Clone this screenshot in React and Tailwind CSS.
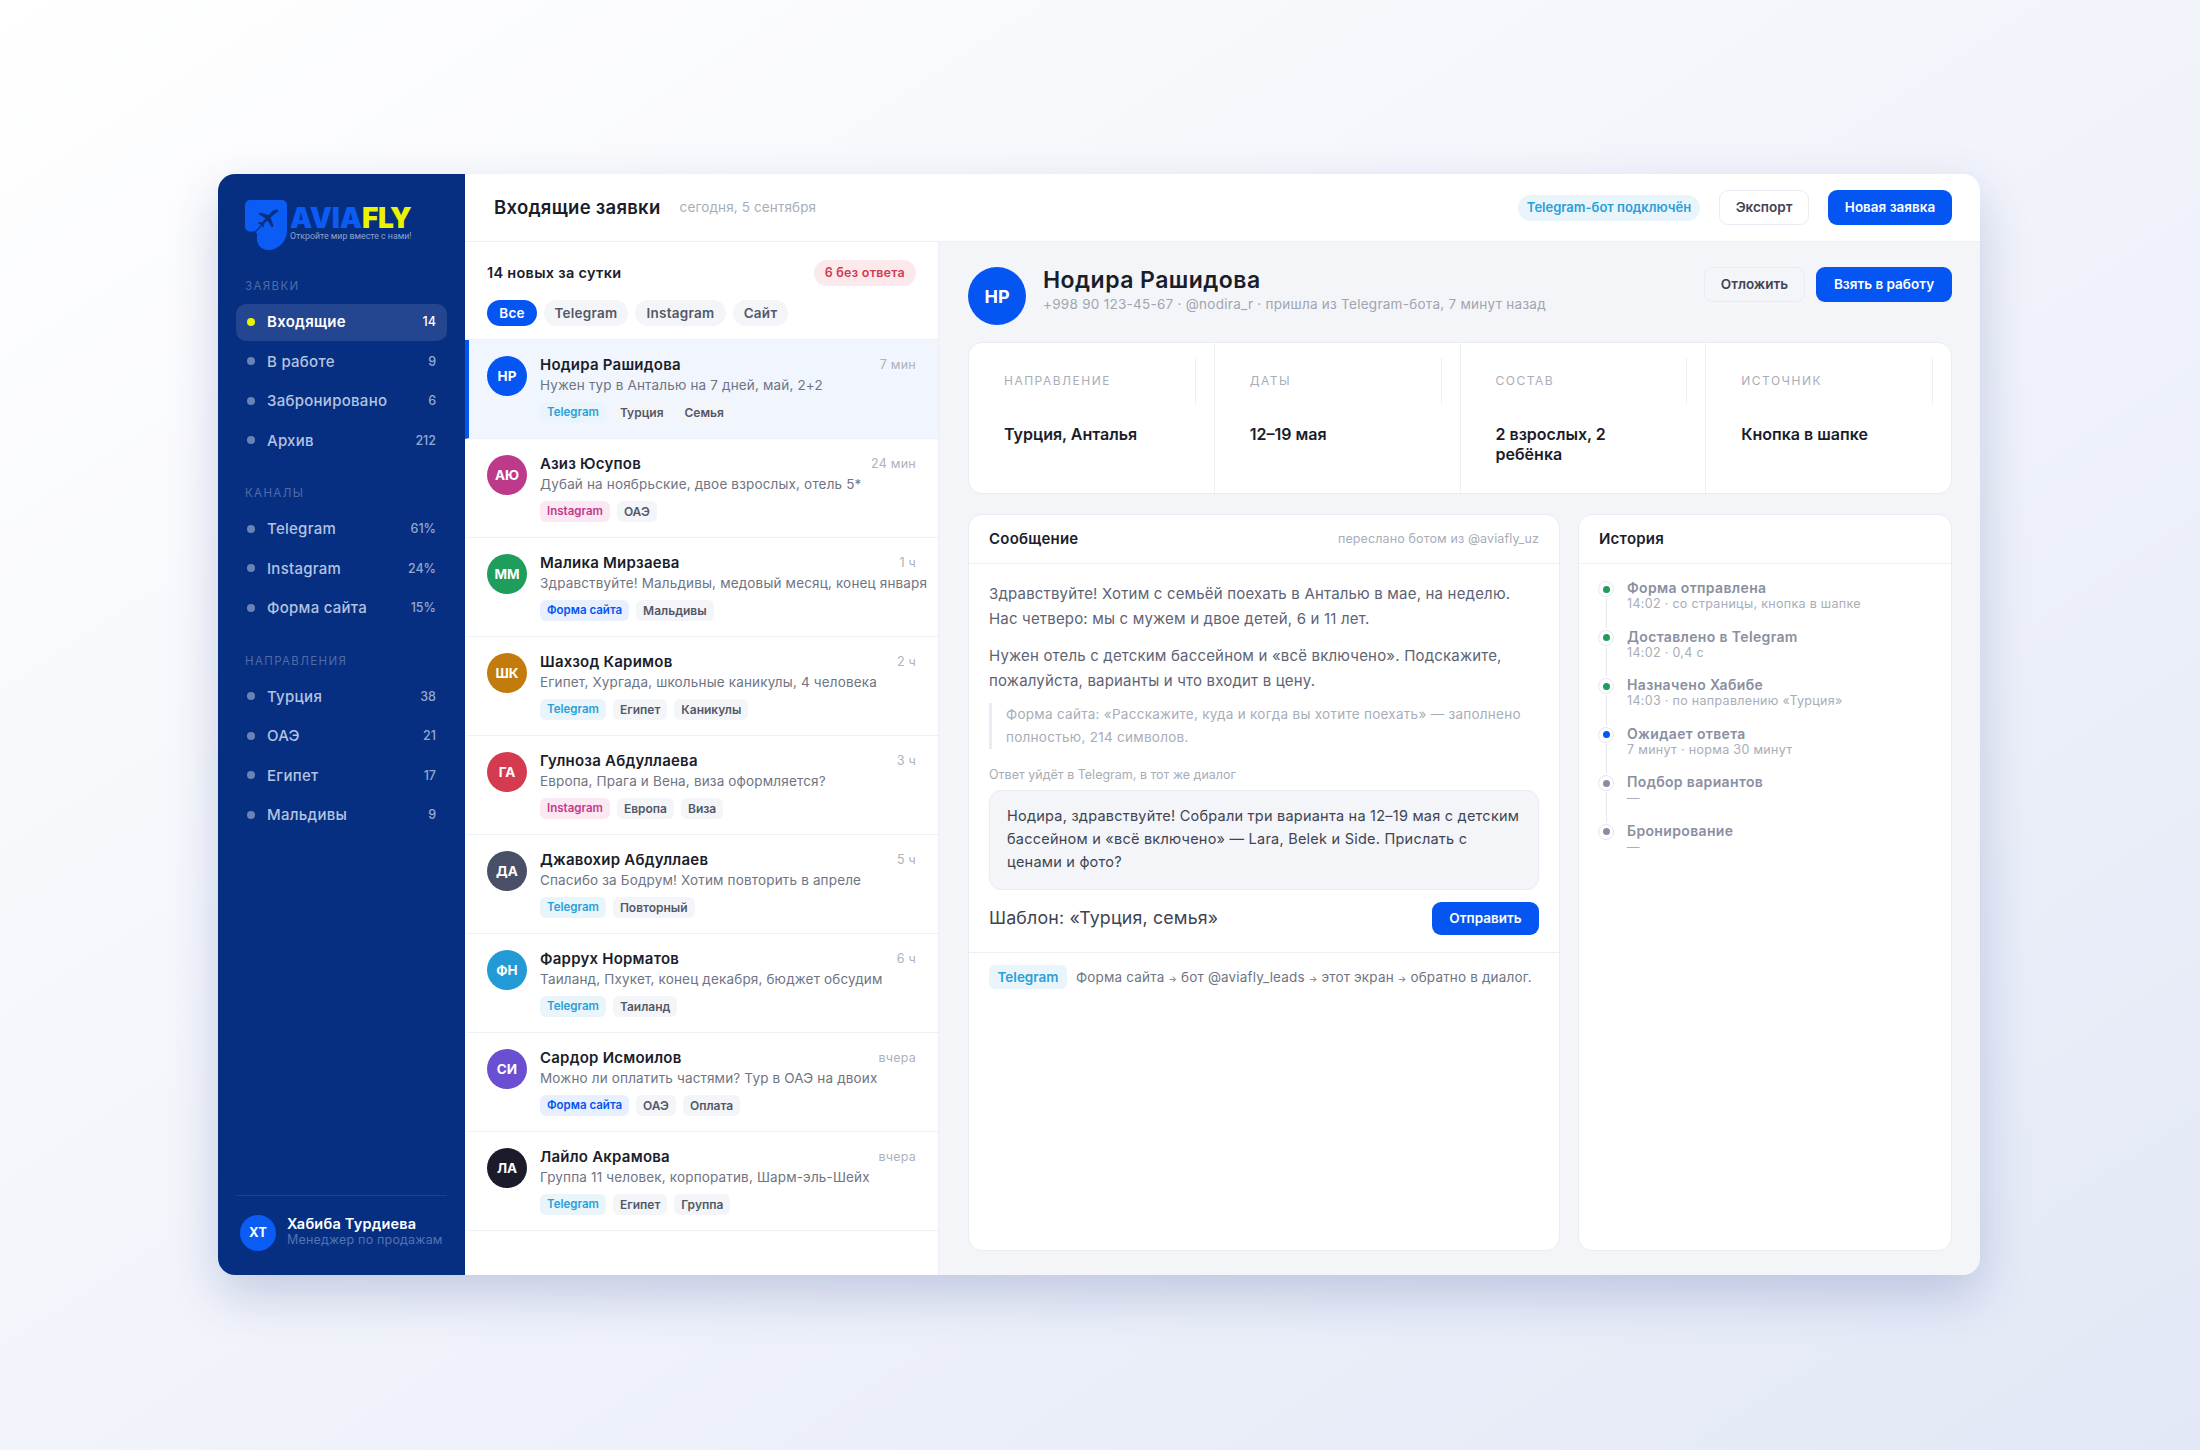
const rows = [
  { i: 'НР', c: 'bg-[#0455f2]', n: 'Нодира Рашидова', t: '7 мин', m: 'Нужен тур в Анталью на 7 дней, май, 2+2', s: 'tg', tags: ['Турция', 'Семья'], active: true },
  { i: 'АЮ', c: 'bg-[#bd3a8b]', n: 'Азиз Юсупов', t: '24 мин', m: 'Дубай на ноябрьские, двое взрослых, отель 5*', s: 'ig', tags: ['ОАЭ'] },
  { i: 'ММ', c: 'bg-[#1f9d5c]', n: 'Малика Мирзаева', t: '1 ч', m: 'Здравствуйте! Мальдивы, медовый месяц, конец января', s: 'web', tags: ['Мальдивы'] },
  { i: 'ШК', c: 'bg-[#c27c0e]', n: 'Шахзод Каримов', t: '2 ч', m: 'Египет, Хургада, школьные каникулы, 4 человека', s: 'tg', tags: ['Египет', 'Каникулы'] },
  { i: 'ГА', c: 'bg-[#d43a50]', n: 'Гулноза Абдуллаева', t: '3 ч', m: 'Европа, Прага и Вена, виза оформляется?', s: 'ig', tags: ['Европа', 'Виза'] },
  { i: 'ДА', c: 'bg-[#4a4f68]', n: 'Джавохир Абдуллаев', t: '5 ч', m: 'Спасибо за Бодрум! Хотим повторить в апреле', s: 'tg', tags: ['Повторный'] },
  { i: 'ФН', c: 'bg-[#229ad6]', n: 'Фаррух Норматов', t: '6 ч', m: 'Таиланд, Пхукет, конец декабря, бюджет обсудим', s: 'tg', tags: ['Таиланд'] },
  { i: 'СИ', c: 'bg-[#6a4fd2]', n: 'Сардор Исмоилов', t: 'вчера', m: 'Можно ли оплатить частями? Тур в ОАЭ на двоих', s: 'web', tags: ['ОАЭ', 'Оплата'] },
  { i: 'ЛА', c: 'bg-[#1b1b2b]', n: 'Лайло Акрамова', t: 'вчера', m: 'Группа 11 человек, корпоратив, Шарм-эль-Шейх', s: 'tg', tags: ['Египет', 'Группа'] },
];

const src = {
  tg: { l: 'Telegram', c: 'bg-[#e9f5fb] text-[#2a9fd8]' },
  ig: { l: 'Instagram', c: 'bg-[#fbe8f2] text-[#c4388c]' },
  web: { l: 'Форма сайта', c: 'bg-[#e8effe] text-[#0455f2]' },
};

const history = [
  ['Форма отправлена', '14:02 · со страницы, кнопка в шапке', 'bg-[#1f9d5c]'],
  ['Доставлено в Telegram', '14:02 · 0,4 с', 'bg-[#1f9d5c]'],
  ['Назначено Хабибе', '14:03 · по направлению «Турция»', 'bg-[#1f9d5c]'],
  ['Ожидает ответа', '7 минут · норма 30 минут', 'bg-[#0455f2]'],
  ['Подбор вариантов', '—', 'bg-[#8a8ca3]'],
  ['Бронирование', '—', 'bg-[#8a8ca3]'],
];

function NavItem({ label, count, active }) {
  return (
    <div className={`flex items-center h-[37px] mb-[2.5px] pl-[11px] pr-[11px] rounded-[10px] ${active ? 'bg-[#24458f]' : ''}`}>
      <span className={`w-[8px] h-[8px] rounded-full mr-[12px] -translate-y-[1px] ${active ? 'bg-[#e9f500]' : 'bg-[#6a83b6]'}`} />
      <span className={`flex-1 text-[15px] tracking-[0.018em] ${active ? 'text-white font-semibold' : 'text-[#b4c3e0] font-medium'}`}>{label}</span>
      <span className={`text-[12.5px] font-medium ${active ? 'text-white' : 'text-[#94a8cf]'}`}>{count}</span>
    </div>
  );
}

function NavLabel({ children, className }) {
  return <div className={`h-[16px] leading-[16px] pl-[9px] text-[11.5px] font-normal tracking-[0.12em] text-[#4f6ca8] mb-[10px] ${className}`}>{children}</div>;
}

function Sidebar() {
  return (
    <aside className="w-[247px] shrink-0 bg-[#062f82] flex flex-col px-[18px]">
      <div className="flex items-start h-[76px] pt-[26px] pl-[9px] mb-[2px]">
        <svg width="42" height="50" viewBox="0 0 42 50" className="shrink-0">
          <path d="M5 0H37a5 5 0 0 1 5 5V30C42 42 33 50 23 50C16 50 11 44 12 37C12.5 33.5 11 31.5 8 31.5H5C2 31.5 0 29 0 26.5V5A5 5 0 0 1 5 0Z" fill="#0a5cf5" />
          <path d="M33 10C31.5 8.5 28.5 10 26.5 12L23.5 15L15 12.5L13.5 14L20.5 18.5L17 22.5L14 22L13 23L16 25L18 27.5L19 26.5L18.5 24L22.5 20.5L27 27.5L28.5 26L25.5 17.5L29.5 14C31.5 12.5 34.5 11.5 33 10Z" fill="#062f82" />
          <path d="M16 26L9 33" stroke="#062f82" strokeWidth="1.2" />
        </svg>
        <div className="ml-[3px] mt-[7px]">
          <div className="text-[28px] leading-[23px] font-black font-['Inter',sans-serif] tracking-[-0.005em]">
            <span className="text-[#0a5cf5]">AVIA</span><span className="text-[#e9f500]">FLY</span>
          </div>
          <div className="text-[8.8px] leading-[11px] mt-[1px] text-[#8ba3cf] font-['Roboto',sans-serif] whitespace-nowrap">Откройте мир вместе с нами!</div>
        </div>
      </div>
      <NavLabel className="mt-[26px]">ЗАЯВКИ</NavLabel>
      <NavItem label="Входящие" count="14" active />
      <NavItem label="В работе" count="9" />
      <NavItem label="Забронировано" count="6" />
      <NavItem label="Архив" count="212" />
      <NavLabel className="mt-[23px]">КАНАЛЫ</NavLabel>
      <NavItem label="Telegram" count="61%" />
      <NavItem label="Instagram" count="24%" />
      <NavItem label="Форма сайта" count="15%" />
      <NavLabel className="mt-[23px]">НАПРАВЛЕНИЯ</NavLabel>
      <NavItem label="Турция" count="38" />
      <NavItem label="ОАЭ" count="21" />
      <NavItem label="Египет" count="17" />
      <NavItem label="Мальдивы" count="9" />
      <div className="mt-auto border-t border-[#1c418f] h-[80px] flex items-center pl-[4px] pb-[6px]">
        <div className="w-[36px] h-[36px] rounded-full bg-[#0a5cf5] text-white text-[13px] font-bold flex items-center justify-center mr-[11px]">ХТ</div>
        <div className="-mt-[3px]">
          <div className="text-[14.5px] leading-[17px] font-semibold text-white tracking-[0.015em]">Хабиба Турдиева</div>
          <div className="text-[12.5px] leading-[15px] text-[#5473ae] tracking-[0.015em] whitespace-nowrap">Менеджер по продажам</div>
        </div>
      </div>
    </aside>
  );
}

function Tag({ children, className }) {
  return <span className={`h-[21px] px-[7px] rounded-[6px] font-semibold flex items-center ${className}`}>{children}</span>;
}

function Row({ r }) {
  return (
    <div className={`h-[99px] shrink-0 border-b border-[#eceff4] flex pt-[16px] pl-[18px] pr-[22px] border-l-[4px] ${r.active ? 'bg-[#f1f5fd] border-l-[#0455f2]' : 'border-l-transparent'}`}>
      <div className={`w-[40px] h-[40px] rounded-full ${r.c} text-white text-[13.5px] font-bold flex items-center justify-center shrink-0 mr-[13px]`}>{r.i}</div>
      <div className="flex-1 min-w-0">
        <div className="flex justify-between items-center h-[18px]">
          <span className="text-[15px] font-semibold text-[#1a1d2b] tracking-[0.015em]">{r.n}</span>
          <span className="text-[12.5px] text-[#adb2bc] tracking-[0.02em]">{r.t}</span>
        </div>
        <div className="text-[13.5px] leading-[20px] mt-[1px] text-[#6f7483] tracking-[0.012em] whitespace-nowrap">{r.m}</div>
        <div className="flex gap-[7px] mt-[7px]">
          <Tag className={`text-[11.5px] ${src[r.s].c}`}>{src[r.s].l}</Tag>
          {r.tags.map((t) => <Tag key={t} className="text-[12px] bg-[#f3f5f9] text-[#535867]">{t}</Tag>)}
        </div>
      </div>
    </div>
  );
}

function ListPanel() {
  return (
    <section className="w-[474px] shrink-0 bg-white border-r border-[#eceff4] flex flex-col">
      <div className="h-[98px] shrink-0 border-b border-[#eceff4] pl-[22px] pr-[22px] pt-[18px]">
        <div className="flex justify-between items-center h-[26px]">
          <span className="text-[14.5px] font-semibold text-[#1a1d2b] tracking-[0.02em]">14 новых за сутки</span>
          <span className="h-[26px] px-[11px] rounded-full bg-[#fce9ec] text-[#d13a50] text-[12.5px] font-semibold tracking-[0.02em] flex items-center">6 без ответа</span>
        </div>
        <div className="flex gap-[7px] mt-[14px] text-[13.5px] font-semibold tracking-[0.02em]">
          <span className="h-[26px] w-[50px] rounded-full bg-[#0455f2] text-white flex items-center justify-center">Все</span>
          <span className="h-[26px] w-[84px] rounded-full bg-[#f3f5f9] text-[#535867] flex items-center justify-center">Telegram</span>
          <span className="h-[26px] w-[91px] rounded-full bg-[#f3f5f9] text-[#535867] flex items-center justify-center">Instagram</span>
          <span className="h-[26px] w-[55px] rounded-full bg-[#f3f5f9] text-[#535867] flex items-center justify-center">Сайт</span>
        </div>
      </div>
      {rows.map((r) => <Row key={r.i} r={r} />)}
    </section>
  );
}

function InfoCell({ label, value, last }) {
  return (
    <div className={`flex-1 basis-0 min-w-0 flex flex-col pt-[15px] pl-[35px] pr-[18px] ${last ? '' : 'border-r border-[#eceff4]'}`}>
      <div className="h-[46px] flex items-center border-r border-[#eceff4] text-[12px] tracking-[0.125em] text-[#a8adb8]">{label}</div>
      <div className="mt-[20px] pr-[30px] text-[16px] leading-[20px] font-semibold text-[#1a1d2b]">{value}</div>
    </div>
  );
}

function Detail() {
  return (
    <section className="flex-1 min-w-0 bg-[#f3f5f9] flex flex-col pl-[29px] pr-[28px] pt-[25px] pb-[24px]">
      <div className="flex items-center h-[58px] shrink-0">
        <div className="w-[58px] h-[58px] rounded-full bg-[#0455f2] text-white text-[18px] font-bold flex items-center justify-center mr-[17px]">НР</div>
        <div className="flex-1 -mt-[13px]">
          <div className="text-[23px] leading-[28px] font-semibold text-[#1a1d2b] tracking-[0.02em]">Нодира Рашидова</div>
          <div className="text-[13.5px] leading-[18px] mt-[1px] text-[#a0a5b1] tracking-[0.02em]">+998 90 123-45-67 · @nodira_r · пришла из Telegram-бота, 7 минут назад</div>
        </div>
        <div className="flex gap-[11px] self-start">
          <span className="w-[101px] h-[35px] rounded-[9px] border border-[#e8ebf1] bg-[#f3f5f9] text-[#3f4453] text-[13.5px] font-semibold flex items-center justify-center">Отложить</span>
          <span className="w-[136px] h-[35px] rounded-[9px] bg-[#0455f2] text-white text-[13.5px] font-semibold flex items-center justify-center">Взять в работу</span>
        </div>
      </div>
      <div className="mt-[17px] h-[152px] shrink-0 flex bg-white rounded-[14px] border border-[#e9ecf2] overflow-hidden">
        <InfoCell label="НАПРАВЛЕНИЕ" value="Турция, Анталья" />
        <InfoCell label="ДАТЫ" value="12–19 мая" />
        <InfoCell label="СОСТАВ" value="2 взрослых, 2 ребёнка" />
        <InfoCell label="ИСТОЧНИК" value="Кнопка в шапке" last />
      </div>
      <div className="mt-[20px] flex-1 flex gap-[18px] min-h-0">
        <div className="w-[592px] shrink-0 bg-white rounded-[14px] border border-[#e9ecf2] flex flex-col">
          <div className="h-[49px] shrink-0 border-b border-[#eceff4] flex items-center justify-between px-[20px]">
            <span className="text-[15px] font-semibold text-[#1a1d2b] tracking-[0.015em]">Сообщение</span>
            <span className="text-[12.5px] text-[#a8adb8] tracking-[0.01em]">переслано ботом из @aviafly_uz</span>
          </div>
          <div className="px-[20px] pt-[18px] pb-[17px] border-b border-[#eceff4] h-[389px] shrink-0">
            <p className="text-[15px] leading-[24.5px] text-[#5e6373] tracking-[0.012em]">Здравствуйте! Хотим с семьёй поехать в Анталью в мае, на неделю.<br />Нас четверо: мы с мужем и двое детей, 6 и 11 лет.</p>
            <p className="text-[15px] leading-[24.5px] text-[#5e6373] tracking-[0.012em] mt-[13px]">Нужен отель с детским бассейном и «всё включено». Подскажите,<br />пожалуйста, варианты и что входит в цену.</p>
            <div className="mt-[10px] border-l-[3px] border-[#e9ecf2] pl-[14px] text-[13.5px] leading-[23px] text-[#a8adb8] tracking-[0.02em]">Форма сайта: «Расскажите, куда и когда вы хотите поехать» — заполнено<br />полностью, 214 символов.</div>
            <div className="mt-[17px] text-[12.5px] leading-[18px] text-[#a8adb8]">Ответ уйдёт в Telegram, в тот же диалог</div>
            <div className="mt-[6px] h-[100px] rounded-[12px] bg-[#f3f5f9] border border-[#e9ecf2] px-[17px] py-[13px] text-[14.5px] leading-[23px] text-[#3f4453] tracking-[0.016em]">Нодира, здравствуйте! Собрали три варианта на 12–19 мая с детским<br />бассейном и «всё включено» — Lara, Belek и Side. Прислать с<br />ценами и фото?</div>
            <div className="mt-[12px] flex items-center justify-between">
              <span className="text-[17.8px] text-[#3f4453] tracking-[0.01em]">Шаблон: «Турция, семья»</span>
              <span className="w-[107px] h-[33px] rounded-[9px] bg-[#0455f2] text-white text-[13.5px] font-semibold flex items-center justify-center">Отправить</span>
            </div>
          </div>
          <div className="flex items-center px-[20px] pt-[12px]">
            <span className="h-[24px] w-[78px] shrink-0 rounded-[6px] bg-[#e9f5fb] text-[#2a9fd8] text-[13.5px] font-semibold flex items-center justify-center mr-[9px]">Telegram</span>
            <span className="text-[13.5px] text-[#6f7483] tracking-[0.012em] whitespace-nowrap">Форма сайта <span className="text-[9px]">→</span> бот @aviafly_leads <span className="text-[9px]">→</span> этот экран <span className="text-[9px]">→</span> обратно в диалог.</span>
          </div>
        </div>
        <div className="flex-1 bg-white rounded-[14px] border border-[#e9ecf2] flex flex-col">
          <div className="h-[49px] shrink-0 border-b border-[#eceff4] flex items-center px-[20px]">
            <span className="text-[15px] font-semibold text-[#1a1d2b] tracking-[0.015em]">История</span>
          </div>
          <div className="pl-[19px] pt-[15px]">
            {history.map((h, i) => (
              <div key={h[0]} className="flex h-[48.5px]">
                <div className="relative w-[16px] mr-[13px] flex flex-col items-center pt-[2px]">
                  <span className="w-[16px] h-[16px] shrink-0 rounded-full bg-white border border-[#e4e7ee] flex items-center justify-center">
                    <span className={`w-[7px] h-[7px] rounded-full ${h[2]}`} />
                  </span>
                  {i < history.length - 1 && <span className="w-px flex-1 bg-[#e4e7ee] mt-[1px]" />}
                </div>
                <div>
                  <div className="text-[14px] leading-[18px] font-semibold text-[#8a8fa1] tracking-[0.025em]">{h[0]}</div>
                  <div className="text-[12.5px] leading-[14px] text-[#a8adb8] tracking-[0.025em]">{h[1]}</div>
                </div>
              </div>
            ))}
          </div>
        </div>
      </div>
    </section>
  );
}

export default function App() {
  return (
    <div className="h-[1450px] w-[2200px] overflow-hidden pt-[174px] pl-[218px] bg-gradient-to-br from-[#ffffff] via-[#f2f4fb] to-[#e2e8f6] font-['Inter',sans-serif]">
      <div className="w-[1762px] h-[1101px] flex rounded-[17px] overflow-hidden shadow-[0_20px_50px_rgba(30,60,140,0.22)]">
        <Sidebar />
        <div className="flex-1 min-w-0 flex flex-col">
          <header className="h-[68px] shrink-0 bg-white border-b border-[#eceff4] flex items-center pl-[29px] pr-[28px]">
            <span className="text-[18.5px] font-semibold text-[#1a1d2b] tracking-[0.015em]">Входящие заявки</span>
            <span className="ml-[19px] text-[13.5px] text-[#a8adb8] tracking-[0.01em]">сегодня, 5 сентября</span>
            <div className="ml-auto flex items-center">
              <span className="w-[182px] h-[26px] rounded-full bg-[#e9f5fb] text-[#2a9fd8] text-[13px] font-semibold flex items-center justify-center mr-[19px]">Telegram-бот подключён</span>
              <span className="w-[90px] h-[35px] rounded-[9px] border border-[#e8ebf1] bg-white text-[#3f4453] text-[13.5px] font-semibold flex items-center justify-center mr-[19px]">Экспорт</span>
              <span className="w-[124px] h-[35px] rounded-[9px] bg-[#0455f2] text-white text-[13.5px] font-semibold flex items-center justify-center">Новая заявка</span>
            </div>
          </header>
          <div className="flex-1 min-h-0 flex">
            <ListPanel />
            <Detail />
          </div>
        </div>
      </div>
    </div>
  );
}
